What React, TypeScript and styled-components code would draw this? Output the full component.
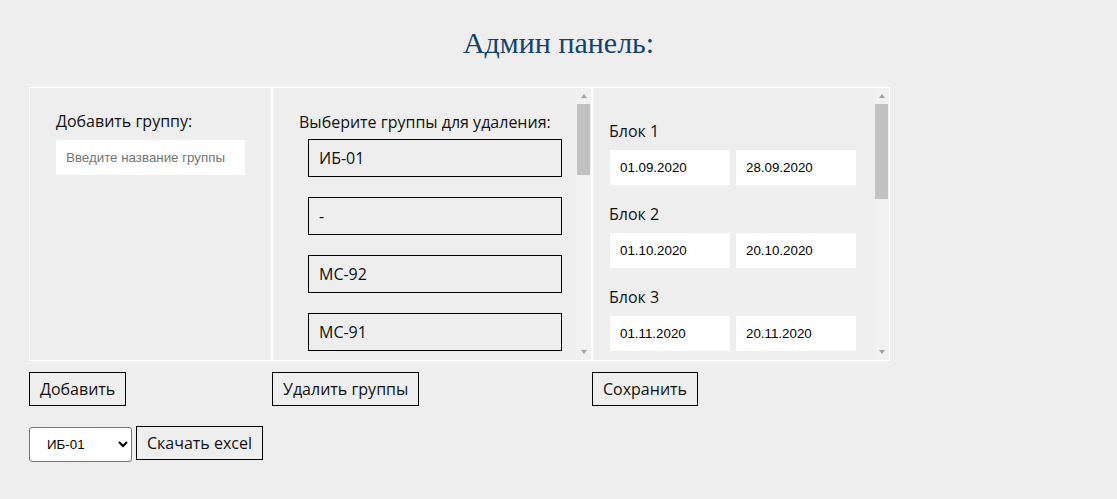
import React from "react";
import styled, { createGlobalStyle } from "styled-components";

const Global = createGlobalStyle`
  html, body { margin: 0; padding: 0; background: #eeeeee; }
  body { font-family: "Open Sans", "Noto Sans", sans-serif; color: #111; }
  * { box-sizing: border-box; }
`;

const Page = styled.div`
  padding: 26px 29px 20px;
  display: flex;
  flex-direction: column;
`;

const Title = styled.h1`
  margin: 0 0 27px;
  font-family: "Liberation Serif", "Times New Roman", serif;
  font-weight: 400;
  font-size: 30px;
  line-height: 34px;
  color: #13426f;
  text-align: center;
`;

const Columns = styled.div`
  display: flex;
  align-items: flex-start;
`;

const Column = styled.div<{ $w: number }>`
  width: ${(p) => p.$w}px;
  display: flex;
  flex-direction: column;
  align-items: flex-start;
  gap: 11px;
`;

const Panel = styled.div`
  position: relative;
  width: 100%;
  height: 274px;
  border: 1px solid #ffffff;
  overflow: hidden;
`;

const Content = styled.div<{ $pt: number; $pl: number; $bar?: boolean }>`
  height: 100%;
  padding: ${(p) => p.$pt}px ${(p) => (p.$bar ? 15 : 0)}px 0 ${(p) => p.$pl}px;
  overflow: hidden;
`;

const ScrollBar = styled.div`
  position: absolute;
  top: 0;
  right: 0;
  bottom: 0;
  width: 15px;
  background: #f1f1f1;
  display: flex;
  flex-direction: column;
`;

const ArrowButton = styled.div<{ $down?: boolean }>`
  height: 15px;
  flex: none;
  display: flex;
  justify-content: center;
  align-items: ${(p) => (p.$down ? "flex-start" : "flex-end")};
  padding: ${(p) => (p.$down ? "5px 0 0" : "0 0 5px")};
  &::before {
    content: "";
    width: 0;
    height: 0;
    border-left: 3.5px solid transparent;
    border-right: 3.5px solid transparent;
    ${(p) =>
      p.$down
        ? "border-top: 4px solid #a3a3a3;"
        : "border-bottom: 4px solid #a3a3a3;"}
  }
`;

const Track = styled.div`
  flex: 1;
  padding: 0 1px;
`;

const Thumb = styled.div`
  margin-top: 1px;
  background: #c1c1c1;
`;

const Label = styled.div`
  font-size: 16px;
  line-height: 22px;
  color: #111;
`;

const TextInput = styled.input<{ $w: number }>`
  width: ${(p) => p.$w}px;
  height: 35px;
  border: none;
  outline: none;
  background: #ffffff;
  padding: 0 10px;
  font-family: "Liberation Sans", Arial, sans-serif;
  font-size: 13.33px;
  color: #000;
  &::placeholder { color: #757575; }
`;

const AddLabel = styled(Label)`
  margin-bottom: 8px;
`;

const DeleteHeading = styled(Label)`
  margin-bottom: 6px;
`;

const GroupList = styled.div`
  display: flex;
  flex-direction: column;
  gap: 20px;
  padding: 0 0 20px 9px;
`;

const GroupItem = styled.div`
  width: 254px;
  height: 38px;
  flex: none;
  border: 1px solid #000;
  padding: 0 10px;
  display: flex;
  align-items: center;
  font-size: 16px;
  color: #111;
`;

const Block = styled.div`
  margin-bottom: 18px;
`;

const BlockLabel = styled(Label)`
  margin-bottom: 8px;
`;

const DateRow = styled.div`
  display: flex;
  gap: 6px;
  padding-left: 1px;
`;

const Button = styled.button`
  height: 34px;
  padding: 0 10px;
  border: 1px solid #000;
  background: transparent;
  font-family: "Open Sans", "Noto Sans", sans-serif;
  font-size: 16px;
  color: #111;
  cursor: pointer;
`;

const BottomRow = styled.div`
  margin-top: 20px;
  display: flex;
  align-items: flex-start;
  gap: 4px;
`;

const Select = styled.select`
  margin-top: 1px;
  width: 103px;
  height: 35px;
  background: #fff;
  border: 1px solid #767676;
  border-radius: 3px;
  padding: 0 8px 0 13px;
  font-family: "Liberation Sans", Arial, sans-serif;
  font-size: 13.33px;
  color: #000;
`;

function FakeScrollBar({ thumb }: { thumb: number }) {
  return (
    <ScrollBar>
      <ArrowButton />
      <Track>
        <Thumb style={{ height: thumb }} />
      </Track>
      <ArrowButton $down />
    </ScrollBar>
  );
}

const groups = ["ИБ-01", "-", "МС-92", "МС-91", "ИБ-02", "ИБ-03", "МС-93", "ПИ-01", "ПИ-02", "ИТ-11", "ИТ-12", "КБ-21", "КБ-22"];

const blocks = [
  ["01.09.2020", "28.09.2020"],
  ["01.10.2020", "20.10.2020"],
  ["01.11.2020", "20.11.2020"],
  ["01.12.2020", "20.12.2020"],
  ["11.01.2021", "30.01.2021"],
  ["08.02.2021", "27.02.2021"],
  ["01.03.2021", "20.03.2021"],
];

export default function App() {
  return (
    <Page>
      <Global />
      <Title>Админ панель:</Title>
      <Columns>
        <Column $w={243}>
          <Panel>
            <Content $pt={22} $pl={26}>
              <AddLabel>Добавить группу:</AddLabel>
              <TextInput $w={189} placeholder="Введите название группы" />
            </Content>
          </Panel>
          <Button>Добавить</Button>
        </Column>
        <Column $w={320}>
          <Panel>
            <Content $pt={23} $pl={26} $bar>
              <DeleteHeading>Выберите группы для удаления:</DeleteHeading>
              <GroupList>
                {groups.map((g, i) => (
                  <GroupItem key={i}>{g}</GroupItem>
                ))}
              </GroupList>
            </Content>
            <FakeScrollBar thumb={71} />
          </Panel>
          <Button>Удалить группы</Button>
        </Column>
        <Column $w={298}>
          <Panel>
            <Content $pt={32} $pl={16} $bar>
              {blocks.map(([a, b], i) => (
                <Block key={i}>
                  <BlockLabel>Блок {i + 1}</BlockLabel>
                  <DateRow>
                    <TextInput $w={120} defaultValue={a} />
                    <TextInput $w={120} defaultValue={b} />
                  </DateRow>
                </Block>
              ))}
            </Content>
            <FakeScrollBar thumb={95} />
          </Panel>
          <Button>Сохранить</Button>
        </Column>
      </Columns>
      <BottomRow>
        <Select defaultValue="ИБ-01">
          {groups.filter((g) => g !== "-").map((g) => (
            <option key={g} value={g}>{g}</option>
          ))}
        </Select>
        <Button>Скачать excel</Button>
      </BottomRow>
    </Page>
  );
}
